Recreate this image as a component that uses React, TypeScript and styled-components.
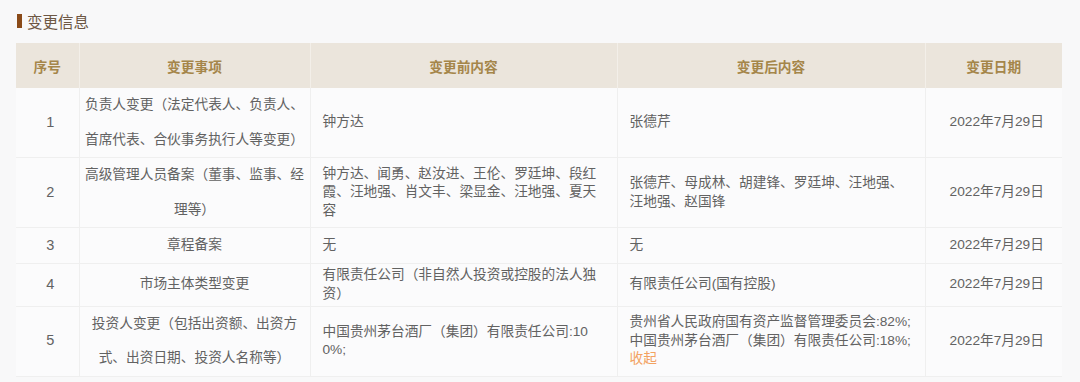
import React from "react";
import styled, { createGlobalStyle } from "styled-components";

const GlobalStyle = createGlobalStyle`
  html, body {
    margin: 0;
    padding: 0;
    background: #f8f8f9;
  }
  body {
    font-family: "Liberation Sans", "Noto Sans CJK SC", sans-serif;
  }
`;

const StyledPage = styled.div`
  width: 1080px;
  height: 382px;
  box-sizing: border-box;
  padding: 10px 18px 0 16px;
  overflow: hidden;
`;

const StyledTitle = styled.h3`
  display: flex;
  align-items: center;
  gap: 5px;
  height: 22px;
  margin: 0 0 11px 1px;
  font-size: 15.5px;
  font-weight: 400;
  color: #6d5744;
  &::before {
    content: "";
    display: block;
    width: 5px;
    height: 14px;
    background: #8a4a18;
  }
`;

const StyledTable = styled.table`
  width: 1046px;
  table-layout: fixed;
  border-collapse: collapse;
  font-size: 13.7px;
  color: #626262;
  background: #fbfbfc;
`;

const StyledHeadCell = styled.th`
  height: 45px;
  padding: 0;
  background: #ebe5dc;
  color: #a5864a;
  font-weight: 700;
  text-align: center;
  border-left: 1px solid #f3efe9;
  &:first-child {
    border-left: none;
  }
`;

const StyledCell = styled.td<{ $align?: "left" | "center"; $tall?: boolean }>`
  padding: ${(p) => (p.$tall ? "0 4px" : "2.5px 6px 2.5px 12px")};
  line-height: ${(p) => (p.$tall ? "34.5px" : "18.5px")};
  text-align: ${(p) => p.$align || "left"};
  vertical-align: middle;
  border: 1px solid #efefef;
  border-top: none;
  &:first-child {
    border-left: none;
  }
  &:last-child {
    border-right: none;
  }
`;

const StyledNumber = styled.span`
  font-size: 14.5px;
`;

const StyledToggle = styled.span`
  color: #f3a261;
  cursor: pointer;
`;

type Row = {
  item: string[];
  before: string[];
  after: string[];
  collapse?: boolean;
};

const rows: Row[] = [
  {
    item: ["负责人变更（法定代表人、负责人、", "首席代表、合伙事务执行人等变更）"],
    before: ["钟方达"],
    after: ["张德芹"],
  },
  {
    item: ["高级管理人员备案（董事、监事、经", "理等）"],
    before: [
      "钟方达、闻勇、赵汝进、王伦、罗廷坤、段红",
      "霞、汪地强、肖文丰、梁显金、汪地强、夏天",
      "容",
    ],
    after: ["张德芹、母成林、胡建锋、罗廷坤、汪地强、", "汪地强、赵国锋"],
  },
  { item: ["章程备案"], before: ["无"], after: ["无"] },
  {
    item: ["市场主体类型变更"],
    before: ["有限责任公司（非自然人投资或控股的法人独", "资）"],
    after: ["有限责任公司(国有控股)"],
  },
  {
    item: ["投资人变更（包括出资额、出资方", "式、出资日期、投资人名称等）"],
    before: ["中国贵州茅台酒厂（集团）有限责任公司:10", "0%;"],
    after: [
      "贵州省人民政府国有资产监督管理委员会:82%;",
      "中国贵州茅台酒厂（集团）有限责任公司:18%;",
    ],
    collapse: true,
  },
];

function Lines({ lines }: { lines: string[] }) {
  return (
    <>
      {lines.map((line, i) => (
        <React.Fragment key={i}>
          {i > 0 && <br />}
          {line}
        </React.Fragment>
      ))}
    </>
  );
}

export default function App() {
  return (
    <StyledPage>
      <GlobalStyle />
      <StyledTitle>变更信息</StyledTitle>
      <StyledTable>
        <colgroup>
          <col style={{ width: 63 }} />
          <col style={{ width: 231 }} />
          <col style={{ width: 307 }} />
          <col style={{ width: 308 }} />
          <col style={{ width: 137 }} />
        </colgroup>
        <thead>
          <tr>
            <StyledHeadCell>序号</StyledHeadCell>
            <StyledHeadCell>变更事项</StyledHeadCell>
            <StyledHeadCell>变更前内容</StyledHeadCell>
            <StyledHeadCell>变更后内容</StyledHeadCell>
            <StyledHeadCell>变更日期</StyledHeadCell>
          </tr>
        </thead>
        <tbody>
          {rows.map((row, i) => (
            <tr key={i}>
              <StyledCell $align="center">
                <StyledNumber>{i + 1}</StyledNumber>
              </StyledCell>
              <StyledCell $align="center" $tall>
                <Lines lines={row.item} />
              </StyledCell>
              <StyledCell>
                <Lines lines={row.before} />
              </StyledCell>
              <StyledCell>
                <Lines lines={row.after} />
                {row.collapse && (
                  <>
                    <br />
                    <StyledToggle>收起</StyledToggle>
                  </>
                )}
              </StyledCell>
              <StyledCell $align="center">2022年7月29日</StyledCell>
            </tr>
          ))}
        </tbody>
      </StyledTable>
    </StyledPage>
  );
}
